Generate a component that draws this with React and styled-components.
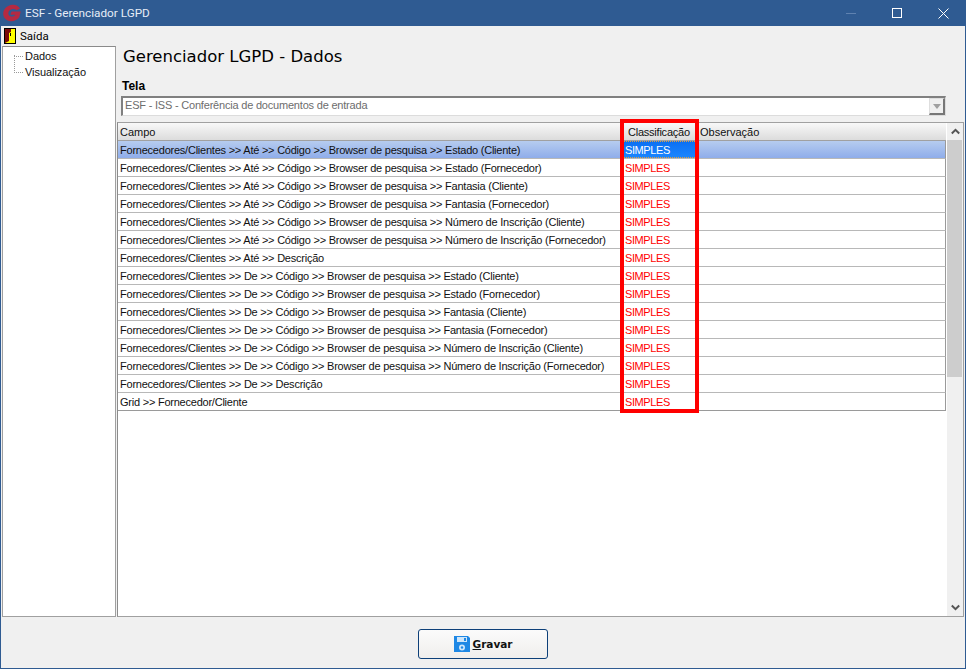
import React from "react";
import styled, { createGlobalStyle } from "styled-components";

const UI = `"Liberation Sans", "Open Sans", sans-serif`;

const Global = createGlobalStyle`
  html, body { margin: 0; padding: 0; background: #f0f0f0; }
  body { font-family: ${UI}; font-size: 11px; color: #000; }
  * { box-sizing: border-box; }
`;

const Win = styled.div`
  width: 966px; height: 669px; display: flex; flex-direction: column; background: #f0f0f0;
  border: 1px solid #2f5b92; border-top: 0; overflow: hidden;
`;
const TitleBar = styled.div`
  height: 26px; flex: none; background: #2f5b92; display: flex; align-items: center; color: #fff;
  margin: 0 -1px; padding-left: 3px;
`;
const TitleText = styled.span`
  font-family: Roboto, sans-serif; font-size: 11.75px; color: #e6edf7; margin-left: 4px; flex: 1;
`;
const WinBtn = styled.div`
  width: 46px; height: 26px; display: flex; align-items: center; justify-content: center;
`;
const MenuBar = styled.div`
  height: 19px; flex: none; display: flex; align-items: center; padding-left: 3px; gap: 4px;
  font-family: Roboto, sans-serif; font-size: 11.5px;
`;
const Body = styled.div`
  height: 572px; flex: none; display: flex; padding: 1px 0 0 1px;
`;
const Tree = styled.div`
  width: 114px; height: 571px; flex: none; background: #fff; position: relative;
  border: 1px solid #a0a0a0; border-top-color: #8a8a8a; padding: 1px 0 0 11px;
`;
const TreeItem = styled.div`
  height: 16px; display: flex; align-items: center; font-size: 11px; color: #111; letter-spacing: -0.05px;
  &::before { content: ""; width: 9px; margin-right: 2px; border-top: 1px dotted #999; }
`;
const TreeLine = styled.div`
  position: absolute; left: 11px; top: 8px; height: 16px; border-left: 1px dotted #999;
`;
const Main = styled.div`
  flex: 1; min-width: 0; display: flex; flex-direction: column; padding-left: 1px;
`;
const Heading = styled.h1`
  margin: 0 0 0 6px; height: 21px; flex: none; font-family: "DejaVu Sans", sans-serif; font-weight: 400; font-size: 16.5px;
  line-height: 21px; color: #000;
`;
const FieldLabel = styled.div`
  margin: 13px 0 0 5px; height: 16px; flex: none; font-size: 12px; font-weight: 700; line-height: 13px;
`;
const Combo = styled.div`
  margin-left: 4px; width: 825px; height: 20px; flex: none; background: #fff; border: 1px solid #dcdcdc; border-top: 2px solid #808080;
  border-left: 2px solid #808080; display: flex; align-items: center; color: #6d6d6d; padding-left: 2px;
  font-size: 11px; letter-spacing: -0.2px;
`;
const ComboText = styled.span` flex: 1; margin-top: -3px; `;
const ComboBtn = styled.div`
  width: 16px; height: 17px; background: #f0f0f0; border: 1px solid #dedede; border-right: 2px solid #777; border-bottom: 2px solid #777;
  display: flex; align-items: center; justify-content: center;
  &::after { content: ""; border: 4px solid transparent; border-top: 5px solid #a0a0a0; border-bottom: 0; }
`;
const GridWrap = styled.div`
  margin-top: 6px; width: 847px; height: 495px; flex: none; background: #fff; display: flex; position: relative;
  border: 1px solid #a0a0a0; border-left: 1px solid #8c8c8c;
`;
const GridBody = styled.div`
  width: 828px; flex: none; display: flex; flex-direction: column;
`;
const HeadRow = styled.div`
  height: 18px; flex: none; display: grid; grid-template-columns: 504px 75px 1fr;
  background: linear-gradient(#f8f8f8, #dcdcdc); border-bottom: 1px solid #a0a0a0;
  font-size: 11px; line-height: 18px;
`;
const HeadCell = styled.div`
  padding-left: ${p => p.$pad || 2}px; white-space: nowrap; color: #111; letter-spacing: ${p => p.$track || 0}px; overflow: hidden;
`;
const Row = styled.div`
  height: 18px; flex: none; display: grid; grid-template-columns: 504px 75px 1fr;
  background: ${p => (p.$sel ? "linear-gradient(#b6ccef, #8fadea)" : "#fff")};
  border-bottom: 1px solid ${p => (p.$last ? "#9a9a9a" : "#b8b8b8")};
  border-right: 1px solid #9a9a9a; line-height: 18px; font-size: 11px; color: #111;
`;
const Cell = styled.div` padding-left: 2px; white-space: nowrap; overflow: hidden; letter-spacing: -0.23px; `;
const ClassCell = styled.div`
  padding-left: 3px; white-space: nowrap; letter-spacing: -0.4px; overflow: hidden;
  color: ${p => (p.$sel ? "#fff" : "#f00")};
  background: ${p => (p.$sel ? "linear-gradient(#0a6ff2, #1b86ff)" : "transparent")};
  outline: ${p => (p.$sel ? "1px dotted #e0a040" : "0")}; outline-offset: -1px;
`;
const Highlight = styled.div`
  position: absolute; left: 502px; top: -4px; width: 79px; height: 294px; border: 4px solid #f00; pointer-events: none;
`;
const ScrollBar = styled.div`
  width: 16px; margin-left: 1px; background: #f0f0f0; display: flex; flex-direction: column; align-items: stretch;
`;
const ScrollBtn = styled.div`
  height: 17px; flex: none; display: flex; align-items: center; justify-content: center;
`;
const Thumb = styled.div` height: 237px; flex: none; background: #cdcdcd; margin-right: 1px; `;
const Spacer = styled.div` flex: 1; `;
const Footer = styled.div`
  height: 51px; flex: none; display: flex; justify-content: center; align-items: flex-start; padding-top: 12px;
`;
const SaveBtn = styled.button`
  width: 130px; height: 30px; border: 1px solid #0d3f78; border-radius: 3px; background: linear-gradient(#fbfbfb, #f0eeec);
  display: flex; align-items: center; justify-content: center; gap: 3px; padding: 0;
  font-family: "DejaVu Sans", sans-serif; font-weight: 700; font-size: 10.5px; color: #111;
  u { text-decoration: underline; }
`;

const rows = [
  "Fornecedores/Clientes >> Até >> Código >> Browser de pesquisa >> Estado (Cliente)",
  "Fornecedores/Clientes >> Até >> Código >> Browser de pesquisa >> Estado (Fornecedor)",
  "Fornecedores/Clientes >> Até >> Código >> Browser de pesquisa >> Fantasia (Cliente)",
  "Fornecedores/Clientes >> Até >> Código >> Browser de pesquisa >> Fantasia (Fornecedor)",
  "Fornecedores/Clientes >> Até >> Código >> Browser de pesquisa >> Número de Inscrição (Cliente)",
  "Fornecedores/Clientes >> Até >> Código >> Browser de pesquisa >> Número de Inscrição (Fornecedor)",
  "Fornecedores/Clientes >> Até >> Descrição",
  "Fornecedores/Clientes >> De >> Código >> Browser de pesquisa >> Estado (Cliente)",
  "Fornecedores/Clientes >> De >> Código >> Browser de pesquisa >> Estado (Fornecedor)",
  "Fornecedores/Clientes >> De >> Código >> Browser de pesquisa >> Fantasia (Cliente)",
  "Fornecedores/Clientes >> De >> Código >> Browser de pesquisa >> Fantasia (Fornecedor)",
  "Fornecedores/Clientes >> De >> Código >> Browser de pesquisa >> Número de Inscrição (Cliente)",
  "Fornecedores/Clientes >> De >> Código >> Browser de pesquisa >> Número de Inscrição (Fornecedor)",
  "Fornecedores/Clientes >> De >> Descrição",
  "Grid >> Fornecedor/Cliente",
];

const Logo = () => (
  <svg width="18" height="18" viewBox="0 0 18 18">
    <path d="M17 4.500C15.500 1.800 12.600.5 9.300.8 4.300 1.300.4 4.900.2 9.300c-.2 4.400 3.100 7.800 7.800 7.900 3.500.1 6.400-1.400 8.200-3.900L17.800 7.500H8.500L7.300 10.800h5.200c-.9 1.200-2.300 1.900-3.900 1.800-2-.1-3.500-1.500-3.300-3.400.2-2.200 2.200-3.900 4.500-4.100 1.500-.1 2.800.3 3.700 1.100Z" fill="#b42a42"/>
  </svg>
);
const Door = () => (
  <svg width="12" height="16" viewBox="0 0 12 16">
    <rect width="12" height="16" fill="#000"/>
    <rect x="1" y="1" width="10" height="14" fill="#ff0"/>
    <path d="M1 1h6v3L5 5v8l-4 2Z" fill="#7a0a0a"/>
    <rect x="6" y="5" width="1" height="3" fill="#000"/>
  </svg>
);
const Floppy = () => (
  <svg width="16" height="16" viewBox="0 0 16 16">
    <path d="M0 0h14l2 2v14H0Z" fill="#1e88e5"/>
    <rect x="3" y="1" width="10" height="5" fill="#cfe6fa"/>
    <rect x="10" y="2" width="2" height="3" fill="#1e88e5"/>
    <circle cx="8" cy="11.500" r="3" fill="#cfe6fa"/>
    <circle cx="8" cy="11.500" r="1.200" fill="#1e88e5"/>
  </svg>
);
const Chevron = ({ up }) => (
  <svg width="9" height="7" viewBox="0 0 9 7">
    <path d={up ? "M0.800 5.500 4.500 1.800 8.200 5.500" : "M0.800 1.500 4.500 5.200 8.200 1.500"} fill="none" stroke="#555" strokeWidth="2"/>
  </svg>
);

export default function App() {
  return (
    <Win>
      <Global />
      <TitleBar>
        <Logo />
        <TitleText>ESF - Gerenciador LGPD</TitleText>
        <WinBtn>
          <svg width="10" height="1" viewBox="0 0 10 1"><rect width="10" height="1" fill="#5f82b0" /></svg>
        </WinBtn>
        <WinBtn>
          <svg width="10" height="10" viewBox="0 0 10 10"><rect x=".5" y=".5" width="9" height="9" fill="none" stroke="#fff" /></svg>
        </WinBtn>
        <WinBtn>
          <svg width="11" height="11" viewBox="0 0 11 11"><path d="M.5.5l10 10M10.500.5l-10 10" stroke="#fff" fill="none" /></svg>
        </WinBtn>
      </TitleBar>
      <MenuBar><Door />Saída</MenuBar>
      <Body>
        <Tree>
          <TreeLine />
          <TreeItem>Dados</TreeItem>
          <TreeItem>Visualização</TreeItem>
        </Tree>
        <Main>
          <Heading>Gerenciador LGPD - Dados</Heading>
          <FieldLabel>Tela</FieldLabel>
          <Combo>
            <ComboText>ESF - ISS - Conferência de documentos de entrada</ComboText>
            <ComboBtn />
          </Combo>
          <GridWrap>
            <GridBody>
              <HeadRow>
                <HeadCell>Campo</HeadCell>
                <HeadCell $pad={6} $track={-0.23}>Classificação</HeadCell>
                <HeadCell $pad={3}>Observação</HeadCell>
              </HeadRow>
              {rows.map((r, i) => (
                <Row key={i} $sel={i === 0} $last={i === rows.length - 1}>
                  <Cell>{r}</Cell>
                  <ClassCell $sel={i === 0}>SIMPLES</ClassCell>
                  <Cell />
                </Row>
              ))}
            </GridBody>
            <ScrollBar>
              <ScrollBtn><Chevron up /></ScrollBtn>
              <Thumb />
              <Spacer />
              <ScrollBtn><Chevron /></ScrollBtn>
            </ScrollBar>
            <Highlight />
          </GridWrap>
        </Main>
      </Body>
      <Footer>
        <SaveBtn><Floppy /><span><u>G</u>ravar</span></SaveBtn>
      </Footer>
    </Win>
  );
}
